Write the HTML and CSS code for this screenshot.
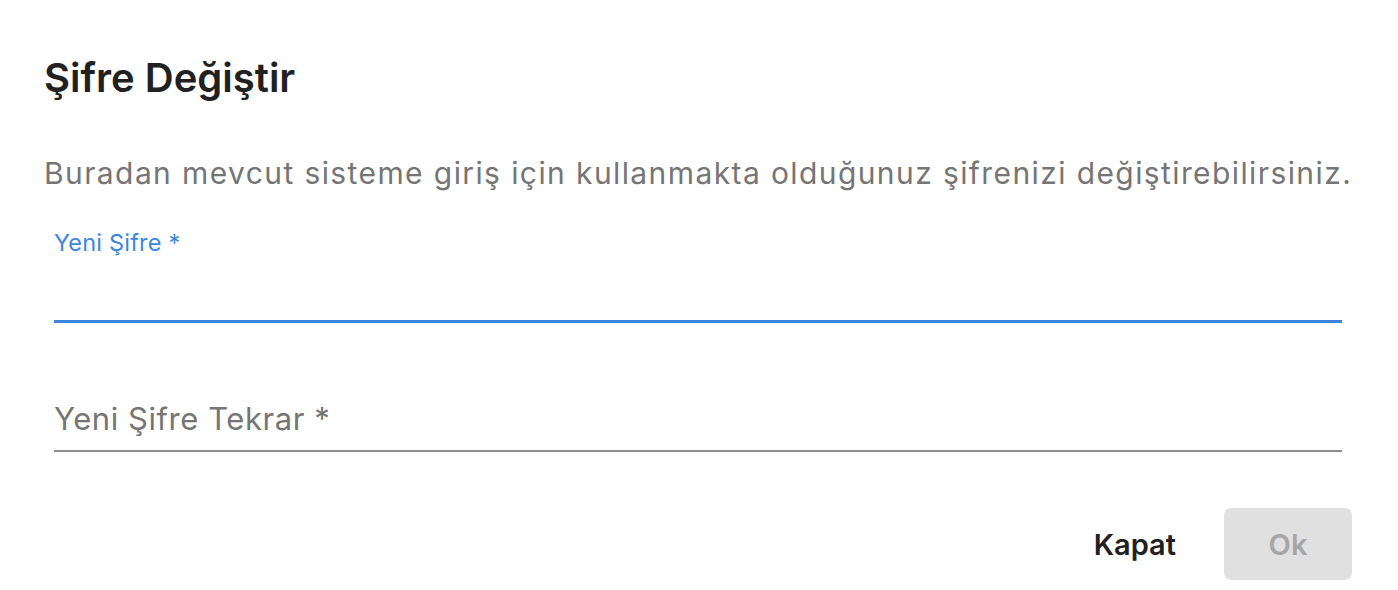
FILE: index.html
```html
<!DOCTYPE html>
<html lang="tr">
<head>
<meta charset="utf-8">
<link rel="stylesheet" href="styles.css">
</head>
<body>
<div class="dialog">
  <h2 class="title">Şifre Değiştir</h2>
  <div class="content">
    <p class="desc">Buradan mevcut sisteme giriş için kullanmakta olduğunuz şifrenizi değiştirebilirsiniz.</p>
    <div class="field focused">
      <label class="label-small">Yeni Şifre *</label>
      <div class="input"></div>
    </div>
    <div class="field second">
      <label class="label-large">Yeni Şifre Tekrar *</label>
      <div class="input"></div>
    </div>
  </div>
  <div class="actions">
    <button class="btn btn-text">Kapat</button>
    <button class="btn btn-disabled">Ok</button>
  </div>
</div>
</body>
</html>
```

FILE: styles.css
```css
html, body {
  margin: 0;
  padding: 0;
  background: #ffffff;
}
body {
  font-family: "Inter", "DejaVu Sans", sans-serif;
  width: 1398px;
  height: 590px;
  overflow: hidden;
}
.dialog {
  padding: 54px 46px 0 44px;
  display: flex;
  flex-direction: column;
}
.title {
  margin: 0;
  font-size: 40px;
  line-height: 48px;
  font-weight: 600;
  color: #212121;
  white-space: nowrap;
}
.content {
  display: flex;
  flex-direction: column;
}
.desc {
  margin: 53px 0 0 0;
  font-size: 30px;
  line-height: 36px;
  color: #757575;
  letter-spacing: 1.4px;
  white-space: nowrap;
}
.field {
  margin: 0 10px;
  display: flex;
  flex-direction: column;
}
.focused {
  margin-top: 38px;
}
.label-small {
  font-size: 23.5px;
  line-height: 28px;
  color: #3b86dc;
  letter-spacing: 0.2px;
  white-space: nowrap;
}
.focused .input {
  height: 63px;
  border-bottom: 3px solid #3b86dc;
}
.second {
  margin-top: 78px;
}
.label-large {
  font-size: 31px;
  line-height: 36px;
  color: #757575;
  letter-spacing: 0.55px;
  white-space: nowrap;
}
.second .input {
  height: 13px;
  border-bottom: 2px solid #8c8c8c;
}
.actions {
  display: flex;
  justify-content: flex-end;
  align-items: center;
  gap: 30px;
  margin-top: 56px;
}
.btn {
  font-family: inherit;
  font-size: 29px;
  font-weight: 600;
  border: none;
  border-radius: 7px;
  height: 72px;
  padding: 0;
  cursor: pointer;
}
.btn-text {
  background: transparent;
  color: #212121;
  padding: 0 18px;
}
.btn-disabled {
  background: #e0e0e0;
  color: #a6a6a6;
  width: 128px;
}
```
